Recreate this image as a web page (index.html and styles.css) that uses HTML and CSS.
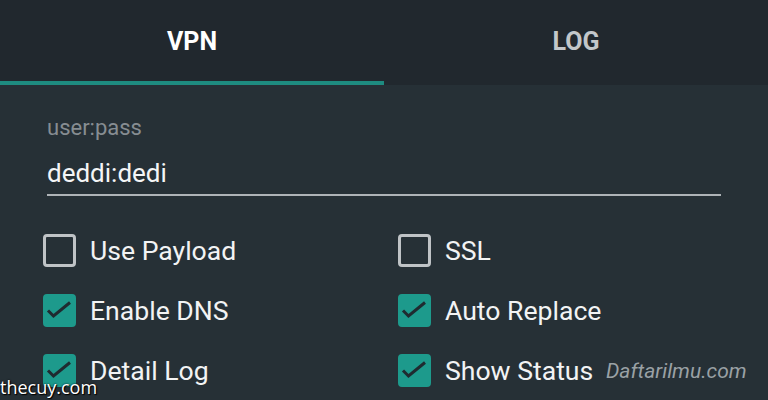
FILE: index.html
```html
<!DOCTYPE html>
<html>
<head>
<meta charset="utf-8">
<link rel="stylesheet" href="styles.css">
</head>
<body>
<div class="app">
  <div class="tabs">
    <div class="tab active"><span>VPN</span></div>
    <div class="tab"><span>LOG</span></div>
  </div>
  <div class="form">
    <div class="field">
      <div class="field-label">user:pass</div>
      <div class="field-input">deddi:dedi</div>
    </div>
    <div class="checks">
      <label class="check"><span class="box"></span><span class="text">Use Payload</span></label>
      <label class="check"><span class="box"></span><span class="text">SSL</span></label>
      <label class="check"><span class="box on"><svg viewBox="3 3 27 27"><path d="M5 16.5l5.5 5.5 16.5-13.5"/></svg></span><span class="text">Enable DNS</span></label>
      <label class="check"><span class="box on"><svg viewBox="3 3 27 27"><path d="M5 16.5l5.5 5.5 16.5-13.5"/></svg></span><span class="text">Auto Replace</span></label>
      <label class="check"><span class="box on"><svg viewBox="3 3 27 27"><path d="M5 16.5l5.5 5.5 16.5-13.5"/></svg></span><span class="text">Detail Log</span></label>
      <label class="check"><span class="box on"><svg viewBox="3 3 27 27"><path d="M5 16.5l5.5 5.5 16.5-13.5"/></svg></span><span class="text">Show Status</span></label>
    </div>
  </div>
  <div class="wm-right">Daftarilmu.com</div>
  <div class="wm-left">thecuy.com</div>
</div>
</body>
</html>
```
FILE: styles.css
```css
* { box-sizing: border-box; }
html, body { margin: 0; padding: 0; }
body {
  background: #263036;
  font-family: Roboto, "Noto Sans", sans-serif;
  color: #eef0f1;
}
.app {
  position: relative;
  width: 768px;
  height: 400px;
  overflow: hidden;
  background: #263036;
}
.tabs {
  display: flex;
  height: 85px;
  background: #21282e;
}
.tab {
  flex: 1;
  display: flex;
  align-items: center;
  justify-content: center;
  font-weight: 700;
  font-size: 25px;
  color: #c3c7ca;
  border-bottom: 4px solid transparent;
  padding-top: 2px;
}
.tab.active {
  color: #ffffff;
  border-bottom-color: #1e8b80;
}
.form {
  padding: 30px 47px 0 47px;
}
.field-label {
  font-size: 22px;
  line-height: 26px;
  color: #868d92;
}
.field-input {
  margin-top: 17px;
  font-size: 26px;
  line-height: 30px;
  color: #f4f5f6;
  padding-bottom: 6px;
  border-bottom: 2px solid #aeb3b7;
}
.checks {
  margin: 24px 0 0 -4px;
  display: grid;
  grid-template-columns: 355px 1fr;
  grid-auto-rows: 60px;
}
.check {
  display: flex;
  align-items: center;
  gap: 14px;
}
.box {
  width: 33px;
  height: 33px;
  border: 3px solid #bfc3c6;
  border-radius: 4px;
  flex: none;
  display: flex;
  align-items: center;
  justify-content: center;
}
.box.on {
  background: #1d9a8c;
  border-color: #1d9a8c;
}
.box svg {
  width: 27px;
  height: 27px;
  display: block;
}
.box svg path {
  fill: none;
  stroke: #1f2b30;
  stroke-width: 3;
  stroke-linecap: butt;
  stroke-linejoin: miter;
}
.text {
  font-size: 26.6px;
  color: #f2f3f4;
  padding-top: 1px;
}
.wm-right {
  position: absolute;
  left: 606px;
  top: 359px;
  font-size: 21px;
  font-style: italic;
  color: #9aa1a5;
}
.wm-left {
  position: absolute;
  left: 0;
  top: 375px;
  font-family: "Open Sans", sans-serif;
  font-size: 18px;
  color: #ffffff;
  text-shadow: 0 0 2px #000, 1px 1px 1px #000;
}
```
